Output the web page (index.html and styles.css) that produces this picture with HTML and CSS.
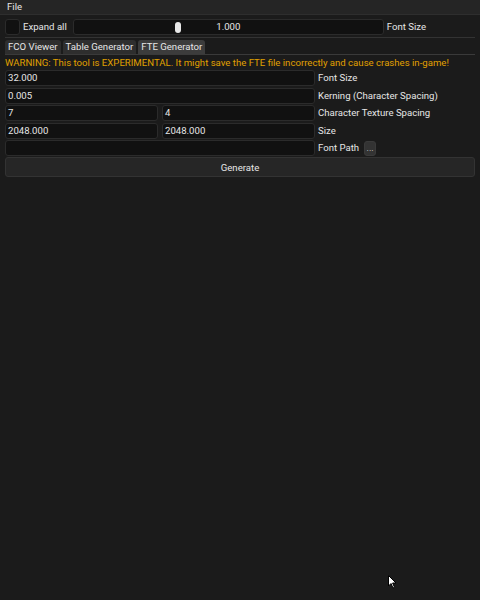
FILE: index.html
```html
<!DOCTYPE html>
<html lang="en">
<head>
    <meta charset="UTF-8">
    <meta name="viewport" content="width=device-width, initial-scale=1.0">
    <link rel="stylesheet" href="styles.css">
    <title>FTE Generator</title>
</head>
<body>
    <div class="menubar">
        <span class="menu-item">File</span>
    </div>
    <div class="window">
        <div class="top-row">
            <div class="checkbox"></div>
            <span class="label">Expand all</span>
            <div class="slider">
                <div class="grab"></div>
                <span class="slider-value">1.000</span>
            </div>
            <span class="label">Font Size</span>
        </div>
        <div class="separator"></div>
        <div class="tabbar">
            <div class="tab">FCO Viewer</div>
            <div class="tab">Table Generator</div>
            <div class="tab active">FTE Generator</div>
        </div>
        <div class="warning">WARNING: This tool is EXPERIMENTAL. It might save the FTE file incorrectly and cause crashes in-game!</div>
        <div class="fields">
            <div class="field">
                <div class="inputs"><div class="input">32.000</div></div>
                <span class="label">Font Size</span>
            </div>
            <div class="field">
                <div class="inputs"><div class="input">0.005</div></div>
                <span class="label">Kerning (Character Spacing)</span>
            </div>
            <div class="field">
                <div class="inputs"><div class="input">7</div><div class="input">4</div></div>
                <span class="label">Character Texture Spacing</span>
            </div>
            <div class="field">
                <div class="inputs"><div class="input">2048.000</div><div class="input">2048.000</div></div>
                <span class="label">Size</span>
            </div>
            <div class="field">
                <div class="inputs"><div class="input"></div></div>
                <span class="label">Font Path</span>
                <button class="small-btn">...</button>
            </div>
        </div>
        <button class="generate">Generate</button>
    </div>
    <svg class="cursor" width="9" height="14" viewBox="0 0 9 14">
        <path d="M0.5 0.5 L0.5 11 L3 8.5 L5 13 L6.5 12.3 L4.6 8 L8 8 Z" fill="#fff" stroke="#000" stroke-width="1"/>
    </svg>
</body>
</html>
```
FILE: styles.css
```css
body {
    margin: 0;
    padding: 0;
    width: 480px;
    height: 600px;
    background-color: #1b1b1b;
    font-family: Roboto, "Noto Sans", sans-serif;
    font-size: 9.6px;
    color: #e6e6e6;
    overflow: hidden;
}

.menubar {
    height: 14px;
    background-color: #252525;
    border-bottom: 1px solid #2e2e2e;
    display: flex;
    align-items: center;
    padding-left: 7px;
}

.menu-item {
    line-height: 14px;
}

.window {
    padding: 4px 5px 0 5px;
    display: flex;
    flex-direction: column;
}

.top-row {
    display: flex;
    align-items: center;
    height: 16px;
}

.checkbox {
    width: 15px;
    height: 16px;
    background-color: #111;
    border: 1px solid #2b2b2b;
    border-radius: 3px;
    box-sizing: border-box;
    margin-right: 3px;
}

.label {
    white-space: nowrap;
    line-height: 16px;
}

.slider {
    position: relative;
    width: 311px;
    height: 16px;
    margin: 0 3px 0 6px;
    background-color: #111;
    border: 1px solid #2b2b2b;
    border-radius: 3px;
    box-sizing: border-box;
    display: flex;
    align-items: center;
    justify-content: center;
}

.grab {
    position: absolute;
    left: 101px;
    top: 2px;
    width: 6px;
    height: 11px;
    background-color: #e8e8e8;
    border-radius: 3px;
}

.slider-value {
    line-height: 14px;
}

.separator {
    height: 1px;
    background-color: #333;
    margin: 2px 0 2px 0;
}

.tabbar {
    display: flex;
    gap: 2px;
    border-bottom: 1px solid #3a3a3a;
    height: 14px;
}

.tab {
    background-color: #2e2e2e;
    border-radius: 3px 3px 0 0;
    padding: 0 3px;
    line-height: 14px;
    color: #e6e6e6;
}

.tab.active {
    background-color: #3c3c3c;
}

.warning {
    color: #e0a000;
    line-height: 15px;
    white-space: nowrap;
}

.fields {
    display: flex;
    flex-direction: column;
    gap: 1.5px;
}

.field {
    display: flex;
    align-items: center;
    height: 16px;
    gap: 3px;
}

.inputs {
    display: flex;
    gap: 4px;
    width: 310px;
}

.input {
    flex: 1;
    height: 16px;
    background-color: #111;
    border: 1px solid #2b2b2b;
    border-radius: 3px;
    box-sizing: border-box;
    padding-left: 2px;
    line-height: 14px;
}

.small-btn {
    font-family: inherit;
    font-size: 9px;
    color: #ccc;
    background-color: #333;
    border: 1px solid #3a3a3a;
    border-radius: 3px;
    height: 15px;
    width: 12px;
    padding: 0;
    margin-left: 2px;
    line-height: 10px;
}

.generate {
    margin-top: 1px;
    height: 20px;
    width: 470px;
    background-color: #262626;
    border: 1px solid #333;
    border-radius: 3px;
    color: #e6e6e6;
    font-family: inherit;
    font-size: 9.6px;
    padding: 0;
}

.cursor {
    position: absolute;
    left: 388px;
    top: 575px;
}
```
